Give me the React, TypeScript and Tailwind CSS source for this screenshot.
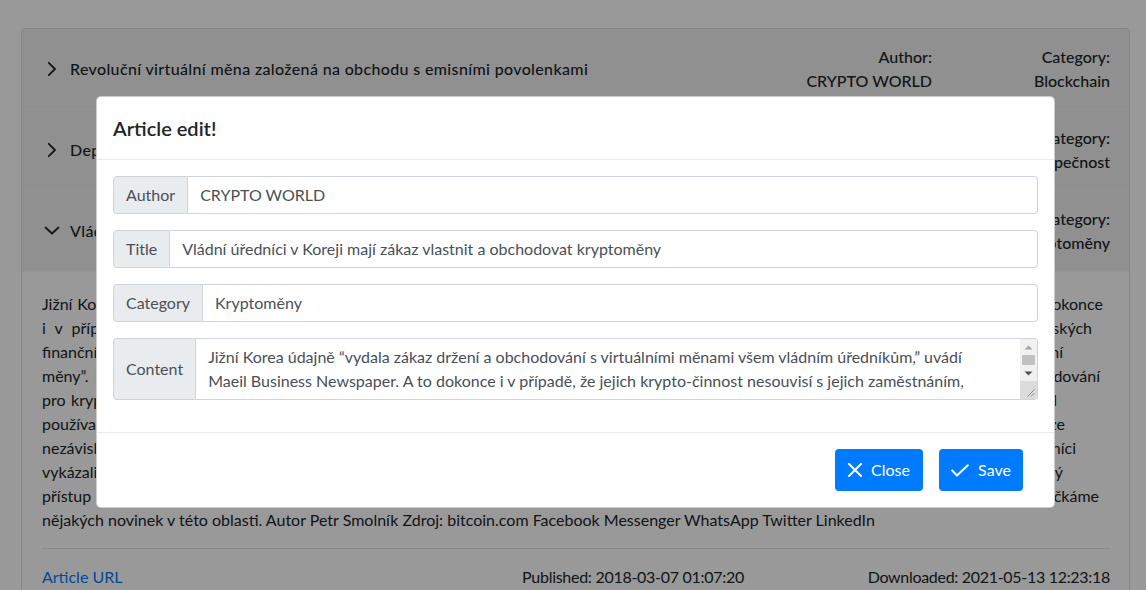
import React from "react";

function ChevronRight() {
  return (
    <svg width="16" height="16" viewBox="0 0 16 16" className="shrink-0">
      <polyline points="4.8,1.8 11,8 4.8,14.2" fill="none" stroke="currentColor" strokeWidth="1.8" strokeLinecap="round" strokeLinejoin="round" />
    </svg>
  );
}

function ChevronDown() {
  return (
    <svg width="16" height="16" viewBox="0 0 16 16" className="shrink-0">
      <polyline points="1.5,4.5 8,10.5 14.5,4.5" fill="none" stroke="currentColor" strokeWidth="1.8" strokeLinecap="round" strokeLinejoin="round" />
    </svg>
  );
}

function XIcon() {
  return (
    <svg width="14" height="14" viewBox="0 0 14 14" className="shrink-0">
      <path d="M1 1 L13 13 M13 1 L1 13" fill="none" stroke="currentColor" strokeWidth="2" strokeLinecap="round" />
    </svg>
  );
}

function CheckIcon() {
  return (
    <svg width="18" height="13" viewBox="0 0 18 13" className="shrink-0">
      <polyline points="1.2,6.5 6,11.5 16.8,1.2" fill="none" stroke="currentColor" strokeWidth="2" strokeLinecap="round" strokeLinejoin="round" />
    </svg>
  );
}

function FakeScrollbar() {
  return (
    <div className="absolute right-[1px] top-[1px] bottom-[1px] w-[17px] flex flex-col bg-[#f1f1f1] rounded-tr-[3px] rounded-br-[3px] overflow-hidden">
      <div className="h-[16px] flex items-center justify-center">
        <svg width="9" height="5" viewBox="0 0 9 5">
          <polygon points="0.5,4.5 4.5,0.5 8.5,4.5" fill="#a3a3a3" />
        </svg>
      </div>
      <div className="h-[10px] px-[2px]">
        <div className="h-full bg-[#c1c1c1]" />
      </div>
      <div className="h-[16px] flex items-center justify-center">
        <svg width="9" height="5" viewBox="0 0 9 5">
          <polygon points="0.5,0.5 8.5,0.5 4.5,4.5" fill="#505050" />
        </svg>
      </div>
      <div className="flex-1 bg-[#dcdcdc] flex items-end justify-end p-[2px]">
        <svg width="10" height="10" viewBox="0 0 10 10">
          <path d="M9.5 2.5 L2.5 9.5 M9.5 6 L6 9.5" stroke="#8a8a8a" strokeWidth="1" fill="none" />
        </svg>
      </div>
    </div>
  );
}

type Row = { title: string; author: string; category: string; open?: boolean };

const rows: Row[] = [
  { title: "Revoluční virtuální měna založená na obchodu s emisními povolenkami", author: "CRYPTO WORLD", category: "Blockchain" },
  { title: "Depozitní služby pro kryptoměny a otázka jejich bezpečnosti", author: "CRYPTO WORLD", category: "Bezpečnost" },
  { title: "Vládní úředníci v Koreji mají zákaz vlastnit a obchodovat kryptoměny", author: "CRYPTO WORLD", category: "Kryptoměny", open: true },
];

const bodyLines: { text: string; cls: string }[] = [
  {
    text: "Jižní Korea údajně “vydala zákaz držení a obchodování s virtuálními měnami všem vládním úředníkům,” uvádí Maeil Business Newspaper. A to dokonce",
    cls: "w-[1061px]",
  },
  {
    text: "i v případě, že jejich krypto-činnost nesouvisí s jejich zaměstnáním. Informaci již potvrdili zástupci vlády i představitelé několika korejských",
    cls: "w-[1050px]",
  },
  {
    text: "finančních institucí. Zákaz se vztahuje na všechny státní zaměstnance, kteří tak nyní “nesmí vlastnit ani obchodovat se žádnou virtuální",
    cls: "w-[1021px]",
  },
  {
    text: "měny”. Nová pravidla mají podle ministerstva zabránit střetu zájmů a zároveň posílit důvěru veřejnosti v regulaci trhu a v celý systém obchodování",
    cls: "w-[1058px]",
  },
  {
    text: "pro kryptoměny. Úředníci, kteří již kryptoměny vlastní, budou muset svá aktiva do konce měsíce prodat nebo je převést na jiný účet, jak uvedl",
    cls: "w-[1015px]",
  },
  {
    text: "používaný v zemi. Podle dostupných informací je tento krok reakcí na rostoucí počet případů, kdy úředníci využili svou pozici i na burze",
    cls: "w-[1023px]",
  },
  {
    text: "nezávisle na svém zaměstnání. V posledních měsících se objevilo několik skandálů, ve kterých figurovali právě vysoce postavení vládní úředníci",
    cls: "w-[1034px]",
  },
  {
    text: "vykázali zisky z obchodování s kryptoměnami. Vláda proto chce, aby všichni zaměstnanci státní správy dodržovali mnohem přísnější a jednotný",
    cls: "w-[1021px]",
  },
  {
    text: "přístup k digitálním měnám. Uvidíme, jak se bude celá situace v Jižní Koreji dále vyvíjet a zda se již v nejbližší době opravdu dočkáme",
    cls: "w-[1057px]",
  },
];

const lastLine =
  "nějakých novinek v této oblasti. Autor Petr Smolník Zdroj: bitcoin.com Facebook Messenger WhatsApp Twitter LinkedIn";

const contentText =
  "Jižní Korea údajně “vydala zákaz držení a obchodování s virtuálními měnami všem vládním úředníkům,” uvádí Maeil Business Newspaper. A to dokonce i v případě, že jejich krypto-činnost nesouvisí s jejich zaměstnáním, uvedli zdroje z korejské Komise pro finanční služby. Zákaz se týká všech státních zaměstnanců.";

function Field({ label, value }: { label: string; value: string }) {
  return (
    <div className="flex h-[38px] mb-4">
      <div className="flex items-center px-3 bg-[#e9ecef] border border-[#ced4da] rounded-l-[4px] text-[#495057]">{label}</div>
      <div className="flex-1 flex items-center px-3 bg-white border border-l-0 border-[#ced4da] rounded-r-[4px] text-[#495057] whitespace-nowrap overflow-hidden">
        {value}
      </div>
    </div>
  );
}

export default function App() {
  return (
    <div
      className="relative h-[590px] overflow-hidden bg-white text-[16px] leading-6 text-[#212529]"
      style={{ fontFamily: "Lato, 'Noto Sans', sans-serif" }}
    >
      <div className="pt-[28px] pl-[21px] pr-[16px]">
        <div className="border border-black/[.125] rounded-[4px] overflow-hidden">
          {rows.map((r) => (
            <div key={r.title} className="flex items-center h-[81px] bg-[#f0f0f0] border-b border-[#f6f6f6] pl-[22px] pr-[19px]">
              {r.open ? <ChevronDown /> : <ChevronRight />}
              <div className="ml-[10px] flex-1 font-medium tracking-[0.35px] whitespace-nowrap">{r.title}</div>
              <div className="w-[178px] text-right font-medium">
                <div>Author:</div>
                <div>{r.author}</div>
              </div>
              <div className="w-[178px] text-right font-medium">
                <div>Category:</div>
                <div>{r.category}</div>
              </div>
            </div>
          ))}
          <div className="bg-white pt-[20px] pl-[20px] pr-[19px] pb-8">
            <p>
              {bodyLines.map((l, i) => (
                <span key={i} className={`block ${l.cls} text-justify [text-align-last:justify]`}>
                  {l.text}
                </span>
              ))}
              <span className="block whitespace-nowrap">{lastLine}</span>
            </p>
            <hr className="my-4 border-black/10" />
            <div className="grid grid-cols-3 gap-[30px]">
              <a className="text-[#007bff]">Article URL</a>
              <div className="text-right tracking-[-0.28px]">Published: 2018-03-07 01:07:20</div>
              <div className="text-right tracking-[-0.3px]">Downloaded: 2021-05-13 12:23:18</div>
            </div>
          </div>
        </div>
      </div>

      <div className="absolute inset-0 bg-black/40" />

      <div className="absolute left-[96px] top-[96px] w-[959px] bg-white border border-black/20 rounded-[5px] overflow-hidden">
        <div className="px-4 py-4 border-b border-[#e9ecef]">
          <h5 className="text-[20px] leading-[30px] font-semibold text-[#212529]">Article edit!</h5>
        </div>
        <div className="p-4">
          <Field label="Author" value="CRYPTO WORLD" />
          <Field label="Title" value="Vládní úředníci v Koreji mají zákaz vlastnit a obchodovat kryptoměny" />
          <Field label="Category" value="Kryptoměny" />
          <div className="flex mb-4">
            <div className="flex items-center px-3 bg-[#e9ecef] border border-[#ced4da] rounded-l-[4px] text-[#495057]">Content</div>
            <div className="relative flex-1 flex">
              <textarea
                rows={2}
                readOnly
                defaultValue={contentText}
                className="flex-1 h-[62px] py-[6px] pl-3 pr-[56px] leading-6 bg-white border border-l-0 border-[#ced4da] rounded-r-[4px] text-[#495057] outline-none resize-none overflow-hidden"
              />
              <FakeScrollbar />
            </div>
          </div>
        </div>
        <div className="flex justify-end gap-4 pt-4 pb-4 pr-[31px] border-t border-[#e9ecef]">
          <button className="flex items-center justify-center gap-[9px] w-[88px] h-[42px] rounded-[4px] bg-[#007bff] text-white">
            <XIcon />
            <span>Close</span>
          </button>
          <button className="flex items-center justify-center gap-[9px] w-[84px] h-[42px] rounded-[4px] bg-[#007bff] text-white">
            <CheckIcon />
            <span>Save</span>
          </button>
        </div>
      </div>
    </div>
  );
}
